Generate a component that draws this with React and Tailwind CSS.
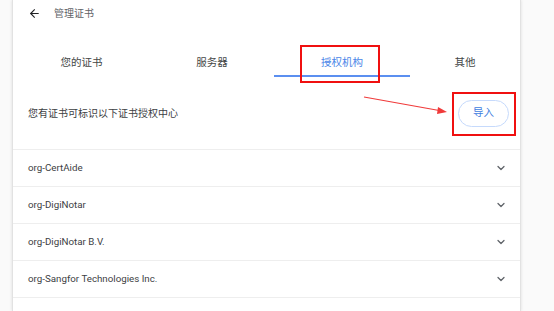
import { ArrowLeft, ChevronDown } from 'lucide-react';

const TABS = [
  { label: '您的证书', w: 'w-[137px]' },
  { label: '服务器', w: 'w-[124px]' },
  { label: '授权机构', w: 'w-[136px]', active: true },
  { label: '其他', w: 'w-[110px]' },
];

const ORGS = [
  'org-CertAide',
  'org-DigiNotar',
  'org-DigiNotar B.V.',
  'org-Sangfor Technologies Inc.',
];

export default function App() {
  return (
    <div className="relative h-[311px] w-[554px] overflow-hidden bg-[#fafafa] font-['Roboto','Noto_Sans_CJK_SC',sans-serif]">
      <div className="ml-[12px] h-full w-[509px] border-x border-[#e2e2e2] bg-white shadow-[0_0_3px_rgba(0,0,0,0.12)]">
        {/* header */}
        <div className="flex h-[27px] items-center pl-[15px]">
          <ArrowLeft size={13} strokeWidth={2} className="text-[#202124]" />
          <span className="ml-[13px] text-[10px] text-[#5f6368]">管理证书</span>
        </div>

        {/* tabs */}
        <div className="mt-[20px] flex h-[30px]">
          {TABS.map((t) => (
            <div
              key={t.label}
              className={`relative flex ${t.w} items-center justify-center pt-[1px] text-[10.5px] ${
                t.active ? 'text-[#4a86e8]' : 'text-[#444746]'
              }`}
            >
              {t.label}
              {t.active && <div className="absolute bottom-0 left-0 h-[2px] w-full bg-[#5b8ff0]" />}
            </div>
          ))}
        </div>

        {/* description */}
        <div className="flex h-[72px] items-center justify-between pl-[15px] pr-[11px]">
          <span className="text-[10px] text-[#3c4043]">您有证书可标识以下证书授权中心</span>
          <button
            type="button"
            className="flex h-[27px] w-[51px] items-center justify-center rounded-full border border-[#c6dafc] text-[10.5px] text-[#3f7de0]"
          >
            导入
          </button>
        </div>

        {/* list */}
        <div className="border-t border-[#eeeeee]">
          {ORGS.map((o) => (
            <div key={o} className="flex h-[37px] items-center justify-between border-b border-[#eeeeee] pl-[15px] pr-[13px]">
              <span className="text-[9.75px] text-[#3c4043]">{o}</span>
              <ChevronDown size={12} strokeWidth={2.5} className="text-[#5f6368]" />
            </div>
          ))}
        </div>
      </div>

      {/* annotations */}
      <div className="absolute left-[300px] top-[45px] h-[38px] w-[80px] border-[2.5px] border-[#f01010]" />
      <div className="absolute left-[452px] top-[92px] h-[44px] w-[64px] border-[2.5px] border-[#f01010]" />
      <svg className="absolute left-0 top-0" width="554" height="311">
        <line x1="364" y1="97" x2="442" y2="111" stroke="#f03a3a" strokeWidth="1.2" />
        <polygon points="447,112 438,107 437,114" fill="#f03a3a" />
      </svg>
    </div>
  );
}
